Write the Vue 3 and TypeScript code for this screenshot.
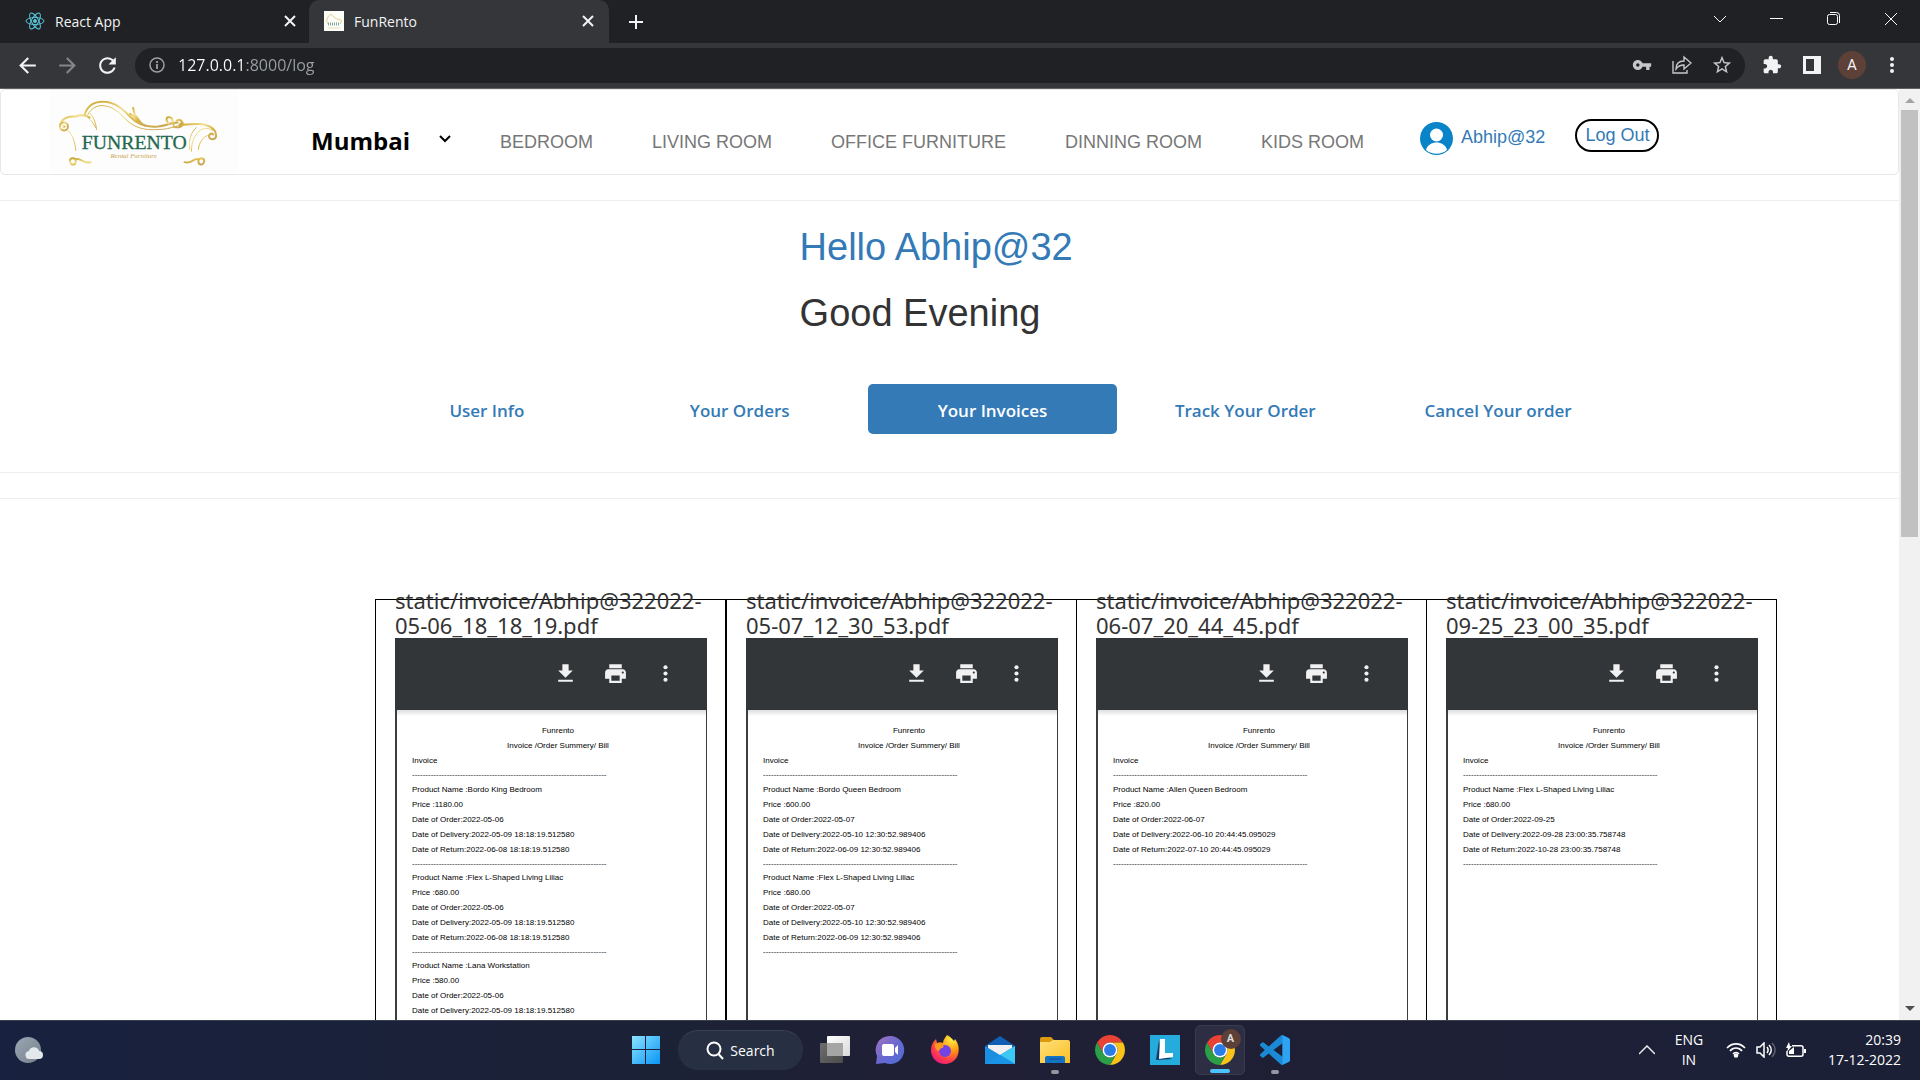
<script setup lang="ts">
import { ref } from 'vue'

interface Item {
  product: string
  price: string
  order: string
  delivery: string
  back?: string
}

interface Invoice {
  file: string
  items: Item[]
}

const user = 'Abhip@32'
const city = ref('Mumbai')
const address = ref('127.0.0.1:8000/log')
const categories = ['BEDROOM', 'LIVING ROOM', 'OFFICE FURNITURE', 'DINNING ROOM', 'KIDS ROOM']
const sections = ['User Info', 'Your Orders', 'Your Invoices', 'Track Your Order', 'Cancel Your order']
const current = ref('Your Invoices')
const rule = '-'.repeat(73)

const invoices: Invoice[] = [
  {
    file: 'static/invoice/Abhip@322022-05-06_18_18_19.pdf',
    items: [
      { product: 'Bordo King Bedroom', price: '1180.00', order: '2022-05-06', delivery: '2022-05-09 18:18:19.512580', back: '2022-06-08 18:18:19.512580' },
      { product: 'Flex L-Shaped Living Liliac', price: '680.00', order: '2022-05-06', delivery: '2022-05-09 18:18:19.512580', back: '2022-06-08 18:18:19.512580' },
      { product: 'Lana Workstation', price: '580.00', order: '2022-05-06', delivery: '2022-05-09 18:18:19.512580' },
    ],
  },
  {
    file: 'static/invoice/Abhip@322022-05-07_12_30_53.pdf',
    items: [
      { product: 'Bordo Queen Bedroom', price: '600.00', order: '2022-05-07', delivery: '2022-05-10 12:30:52.989406', back: '2022-06-09 12:30:52.989406' },
      { product: 'Flex L-Shaped Living Liliac', price: '680.00', order: '2022-05-07', delivery: '2022-05-10 12:30:52.989406', back: '2022-06-09 12:30:52.989406' },
    ],
  },
  {
    file: 'static/invoice/Abhip@322022-06-07_20_44_45.pdf',
    items: [
      { product: 'Allen Queen Bedroom', price: '820.00', order: '2022-06-07', delivery: '2022-06-10 20:44:45.095029', back: '2022-07-10 20:44:45.095029' },
    ],
  },
  {
    file: 'static/invoice/Abhip@322022-09-25_23_00_35.pdf',
    items: [
      { product: 'Flex L-Shaped Living Liliac', price: '680.00', order: '2022-09-25', delivery: '2022-09-28 23:00:35.758748', back: '2022-10-28 23:00:35.758748' },
    ],
  },
]
</script>

<template>
  <div class="desktop">
    <svg class="defs" aria-hidden="true">
      <defs>
        <linearGradient id="gold" x1="0" y1="0" x2="1" y2="1">
          <stop offset="0" stop-color="#c9a227" />
          <stop offset="0.35" stop-color="#f3e08e" />
          <stop offset="0.6" stop-color="#d9b544" />
          <stop offset="1" stop-color="#c8a65a" />
        </linearGradient>
        <linearGradient id="win" x1="0" y1="0" x2="1" y2="1">
          <stop offset="0" stop-color="#8be3ff" />
          <stop offset="1" stop-color="#0a95f7" />
        </linearGradient>
        <linearGradient id="tvBack" x1="0" y1="0" x2="1" y2="1">
          <stop offset="0" stop-color="#6e6e6e" />
          <stop offset="1" stop-color="#4b4b4b" />
        </linearGradient>
        <linearGradient id="tvFront" x1="0" y1="0" x2="1" y2="1">
          <stop offset="0" stop-color="#ffffff" />
          <stop offset="1" stop-color="#d9d9d9" />
        </linearGradient>
        <linearGradient id="chat" x1="0" y1="0" x2="1" y2="1">
          <stop offset="0" stop-color="#a574c0" />
          <stop offset="0.5" stop-color="#6a68d0" />
          <stop offset="1" stop-color="#4a6fd6" />
        </linearGradient>
        <radialGradient id="fox" cx="0.75" cy="0.15" r="1">
          <stop offset="0" stop-color="#fff24a" />
          <stop offset="0.4" stop-color="#ff980e" />
          <stop offset="0.75" stop-color="#ff3750" />
          <stop offset="1" stop-color="#e31587" />
        </radialGradient>
        <linearGradient id="mail" x1="0" y1="0" x2="1" y2="1">
          <stop offset="0" stop-color="#1b8fe0" />
          <stop offset="1" stop-color="#1a8de0" />
        </linearGradient>
        <linearGradient id="folder" x1="0" y1="0" x2="1" y2="1">
          <stop offset="0" stop-color="#ffe07a" />
          <stop offset="1" stop-color="#fbbf24" />
        </linearGradient>
        <linearGradient id="moon" x1="0" y1="0" x2="1" y2="1">
          <stop offset="0" stop-color="#9aa7b2" />
          <stop offset="1" stop-color="#75818c" />
        </linearGradient>
        <symbol id="sofa" viewBox="0 0 188 84">
          <g fill="none" stroke="url(#gold)" stroke-linecap="round">
            <path stroke-width="2" d="M34 25C37 15 45 11 54 12C66 13 73 20 80 27C87 35 96 38 108 37C116 36 122 33 128 33" />
            <path stroke-width="1" d="M37 25C41 18 47 15 54 16C63 17 69 23 76 30C84 38 94 41 108 40C118 40 124 37 130 36" />
            <path stroke-width="2" d="M9 36C10 29 18 26 25 27C30 24 36 26 39 28" />
            <path stroke-width="1" d="M39 23C43 28 45 32 46 40M36 27C41 31 43 34 45 38M17 41C22 46 24 52 25 61" />
            <circle stroke-width="2" cx="13" cy="37" r="4" />
            <circle stroke-width="1" cx="13" cy="37" r="1" />
            <path stroke-width="2" d="M83 18L86 31M80 24L91 34M84 25C89 28 88 33 95 36" />
            <path stroke-width="2" d="M119 34C115 30 117 26 121 28C125 30 121 34 124 35M127 31C130 29 134 31 131 35M124 37C129 39 134 37 133 33" />
            <path stroke-width="2" d="M130 35C140 36 148 33 155 35C163 37 167 41 167 46C167 50 162 51 160 48C159 45 162 43 164 45" />
            <path stroke-width="1" d="M142 62C142 52 145 45 152 40C157 38 161 39 164 41M149 60C150 52 154 48 158 46M147 38C142 42 139 50 140 60" />
            <path stroke-width="2" d="M19 72C19 68 25 68 25 72C25 76 20 77 19 72M25 70C30 68 31 75 40 73M155 72C155 68 149 68 149 72C149 76 154 77 155 72M149 70C144 68 144 75 135 73" />
            <path stroke-width="1" d="M40 74H135" />
          </g>
          <text x="31" y="60" font-family="'Liberation Serif', serif" font-size="20" fill="#22684f" stroke="#22684f" stroke-width="0.3">FUNRENTO</text>
          <text x="60" y="69" font-family="'Liberation Serif', serif" font-style="italic" font-size="7" fill="#c9a24a">Rental Furniture</text>
        </symbol>
        <symbol id="chrome" viewBox="0 0 48 48">
          <path fill="#ea4335" d="M3.22 12A24 24 0 0 1 44.78 12L24 12A12 12 0 0 0 13.61 30Z" />
          <path fill="#fbc31a" d="M44.78 12A24 24 0 0 1 24 48L34.39 30A12 12 0 0 0 24 12Z" />
          <path fill="#2b9f48" d="M3.22 12A24 24 0 0 0 24 48L34.39 30A12 12 0 0 1 13.61 30Z" />
          <circle cx="24" cy="24" r="12" fill="#fff" />
          <circle cx="24" cy="24" r="9.5" fill="#2a7de9" />
        </symbol>
        <symbol id="cross" viewBox="0 0 12 12">
          <path d="M1 1l10 10M11 1L1 11" fill="none" stroke="#f1f3f4" stroke-width="2" />
        </symbol>
        <symbol id="dots" viewBox="0 0 24 24">
          <circle cx="12" cy="6" r="2" /><circle cx="12" cy="12" r="2" /><circle cx="12" cy="18" r="2" />
        </symbol>
      </defs>
    </svg>

    <header class="browser">
      <div class="strip">
        <div class="tab">
          <svg class="fav" viewBox="0 0 20 20" fill="none" stroke="#58c4dc" stroke-width="1">
            <ellipse cx="10" cy="10" rx="9" ry="3.5" />
            <ellipse cx="10" cy="10" rx="9" ry="3.5" transform="rotate(60 10 10)" />
            <ellipse cx="10" cy="10" rx="9" ry="3.5" transform="rotate(120 10 10)" />
            <circle cx="10" cy="10" r="1.5" fill="#58c4dc" />
          </svg>
          <span>React App</span>
          <button class="x" aria-label="Close React App"><svg width="12" height="12"><use href="#cross" /></svg></button>
        </div>
        <div class="tab active">
          <svg class="fav" viewBox="0 0 20 20">
            <rect width="20" height="20" fill="#fdfdfa" />
            <path d="M3 9C4 4 7 2 9 5C11 8 14 8 17 9M2 9L4 13M18 9L16 13" fill="none" stroke="#e2cf83" />
            <path d="M4 13h12" stroke="#7fa99a" stroke-width="3" stroke-dasharray="1 1" />
            <path d="M4 17h12" stroke="#ecdfae" />
          </svg>
          <span>FunRento</span>
          <button class="x" aria-label="Close FunRento"><svg width="12" height="12"><use href="#cross" /></svg></button>
        </div>
        <button class="new" aria-label="New tab">
          <svg width="16" height="16" viewBox="0 0 16 16"><path d="M8 1v14M1 8h14" stroke="#f1f3f4" stroke-width="2" /></svg>
        </button>
        <div class="window">
          <button aria-label="Search tabs"><svg width="14" height="14" viewBox="0 0 14 14"><path d="M1 4l6 6 6-6" /></svg></button>
          <button aria-label="Minimize"><svg width="14" height="14" viewBox="0 0 14 14"><path d="M0 6.500h13" /></svg></button>
          <button aria-label="Restore"><svg width="14" height="14" viewBox="0 0 14 14"><rect x="0.500" y="2.500" width="10" height="10" rx="2" /><path d="M3 .5h6.500a3 3 0 0 1 3 3V11" /></svg></button>
          <button aria-label="Close"><svg width="14" height="14" viewBox="0 0 14 14"><path d="M1 1l12 12M13 1L1 13" /></svg></button>
        </div>
      </div>

      <div class="toolbar">
        <button class="nav-btn" aria-label="Back"><svg width="25" height="25" viewBox="0 0 24 24"><path d="M20 11H7.830l5.590-5.590L12 4l-8 8 8 8 1.410-1.410L7.830 13H20v-2z" /></svg></button>
        <button class="nav-btn dim" aria-label="Forward"><svg width="25" height="25" viewBox="0 0 24 24"><path d="M12 4l-1.410 1.410L16.170 11H4v2h12.170l-5.580 5.590L12 20l8-8z" /></svg></button>
        <button class="nav-btn" aria-label="Reload"><svg width="25" height="25" viewBox="0 0 24 24"><path d="M17.650 6.350C16.200 4.900 14.210 4 12 4c-4.420 0-7.990 3.580-7.990 8s3.570 8 7.990 8c3.730 0 6.840-2.550 7.730-6h-2.080c-.82 2.330-3.040 4-5.650 4-3.310 0-6-2.690-6-6s2.690-6 6-6c1.660 0 3.140.69 4.220 1.780L13 11h7V4l-2.350 2.350z" /></svg></button>
        <div class="omnibox">
          <svg width="16" height="16" viewBox="0 0 16 16"><circle cx="8" cy="8" r="7" fill="none" stroke="#9aa0a6" stroke-width="1.500" /><path d="M8 7v5M8 4v2" stroke="#9aa0a6" stroke-width="1.800" /></svg>
          <input v-model="address" class="url" type="text" aria-label="Address" />
          <button aria-label="Passwords"><svg width="20" height="20" viewBox="0 0 24 24"><path d="M12.650 10C11.830 7.670 9.610 6 7 6c-3.310 0-6 2.690-6 6s2.690 6 6 6c2.610 0 4.830-1.670 5.650-4H17v4h4v-4h2v-4H12.650zM7 14c-1.100 0-2-.9-2-2s.9-2 2-2 2 .9 2 2-.9 2-2 2z" /></svg></button>
          <button aria-label="Share"><svg width="20" height="20" viewBox="0 0 20 20"><path d="M1 6v12h14v-3M12 2l7 6-7 6v-4c-4 0-6 1-8 4 0-5 3-8 8-8z" fill="none" stroke="#c4c7cc" stroke-width="1.400" /></svg></button>
          <button aria-label="Bookmark"><svg width="22" height="22" viewBox="0 0 24 24"><path d="M22 9.240l-7.190-.62L12 2 9.190 8.630 2 9.240l5.460 4.730L5.820 21 12 17.270 18.180 21l-1.630-7.030L22 9.240zM12 15.400l-3.760 2.270 1-4.280-3.320-2.880 4.380-.38L12 6.100l1.710 4.040 4.380.38-3.320 2.880 1 4.280L12 15.400z" /></svg></button>
        </div>
        <div class="extras">
          <button aria-label="Extensions"><svg width="20" height="20" viewBox="0 0 24 24"><path d="M20.500 11H19V7c0-1.100-.9-2-2-2h-4V3.500C13 2.120 11.880 1 10.500 1S8 2.120 8 3.500V5H4c-1.100 0-1.990.9-1.990 2v3.800H3.500c1.490 0 2.700 1.210 2.700 2.700s-1.210 2.700-2.700 2.700H2V20c0 1.100.9 2 2 2h3.800v-1.500c0-1.490 1.210-2.700 2.700-2.700 1.490 0 2.700 1.210 2.700 2.700V22H17c1.100 0 2-.9 2-2v-4h1.500c1.380 0 2.500-1.120 2.500-2.500S21.880 11 20.500 11z" /></svg></button>
          <button aria-label="Side panel"><svg width="18" height="18" viewBox="0 0 18 18"><path fill-rule="evenodd" d="M0 0h18v18H0zM3 3v12h8V3z" /></svg></button>
          <button class="avatar" aria-label="Profile">A</button>
          <button aria-label="Menu"><svg width="24" height="24"><use href="#dots" /></svg></button>
        </div>
      </div>
    </header>

    <div class="viewport">
      <main class="page">
        <nav class="navbar">
          <svg class="logo" role="img" aria-label="Funrento"><use href="#sofa" /></svg>
          <div class="city">
            <select v-model="city" aria-label="City">
              <option>Mumbai</option>
            </select>
            <svg width="12" height="8" viewBox="0 0 12 8"><path d="M1 1l5 5 5-5" fill="none" stroke="#000" stroke-width="2" /></svg>
          </div>
          <div class="cats">
            <a v-for="c in categories" :key="c" href="#">{{ c }}</a>
          </div>
          <a class="account" href="#">
            <svg width="33" height="33" viewBox="0 0 33 33">
              <circle cx="16.500" cy="16.500" r="16.500" fill="#0a84c8" />
              <circle cx="16.500" cy="13" r="6.500" fill="#fff" />
              <path d="M6 28C7 23 12 20.500 16.500 20.500S26 23 27 28C21 33 12 33 6 28z" fill="#fff" />
            </svg>
            {{ user }}
          </a>
          <a class="logout" href="#">Log Out</a>
        </nav>

        <section class="hello">
          <h1 class="name">Hello {{ user }}</h1>
          <h1>Good Evening</h1>
          <div class="pills">
            <button v-for="s in sections" :key="s" :class="{ on: s === current }" @click="current = s">{{ s }}</button>
          </div>
        </section>

        <section class="cards">
          <article v-for="inv in invoices" :key="inv.file" class="card">
            <h4>{{ inv.file }}</h4>
            <div class="viewer">
              <div class="tools">
                <button aria-label="Download"><svg width="25" height="25" viewBox="0 0 24 24"><path d="M19 9h-4V3H9v6H5l7 7 7-7zM5 18v2h14v-2H5z" /></svg></button>
                <button aria-label="Print"><svg width="25" height="25" viewBox="0 0 24 24"><path d="M19 8H5c-1.660 0-3 1.340-3 3v6h4v4h12v-4h4v-6c0-1.660-1.340-3-3-3zm-3 11H8v-5h8v5zm3-7c-.55 0-1-.45-1-1s.45-1 1-1 1 .45 1 1-.45 1-1 1zm-1-9H6v4h12V3z" /></svg></button>
                <button aria-label="More actions"><svg width="25" height="25"><use href="#dots" /></svg></button>
              </div>
              <div class="sheet">
                <p class="mid">Funrento</p>
                <p class="mid">Invoice /Order Summery/ Bill</p>
                <p>Invoice</p>
                <p class="rule top">{{ rule }}</p>
                <template v-for="it in inv.items" :key="it.product">
                  <p>Product Name :{{ it.product }}</p>
                  <p>Price :{{ it.price }}</p>
                  <p>Date of Order:{{ it.order }}</p>
                  <p>Date of Delivery:{{ it.delivery }}</p>
                  <template v-if="it.back">
                    <p>Date of Return:{{ it.back }}</p>
                    <p class="rule">{{ rule }}</p>
                  </template>
                </template>
              </div>
            </div>
          </article>
        </section>
      </main>
      <div class="scroll">
        <svg width="10" height="5" viewBox="0 0 10 5"><path d="M0 5l5-5 5 5z" fill="#a3a3a3" /></svg>
        <div class="track"><div class="thumb"></div></div>
        <svg width="10" height="5" viewBox="0 0 10 5"><path d="M0 0l5 5 5-5z" fill="#505050" /></svg>
      </div>
    </div>

    <footer class="taskbar">
      <button class="side" aria-label="Weather">
        <svg width="28" height="28" viewBox="0 0 28 28">
          <circle cx="13" cy="14" r="13" fill="url(#moon)" />
          <path d="M15 23a4 4 0 0 1-1-8c1-5 9-5 10 0a4 4 0 0 1 0 8z" fill="#e3e8ec" />
        </svg>
      </button>
      <div class="apps">
        <button aria-label="Start">
          <svg width="30" height="30" viewBox="0 0 30 30" fill="url(#win)"><path d="M1 1h13v13H1zM15 1h14v13H15zM1 15h13v14H1zM15 15h14v14H15z" /></svg>
        </button>
        <button class="search">
          <svg width="20" height="20" viewBox="0 0 20 20" fill="none" stroke="#fff" stroke-width="2"><circle cx="9" cy="8" r="6.500" /><path d="M13.500 13L18 18" /></svg>
          Search
        </button>
        <button aria-label="Task view">
          <svg width="30" height="30" viewBox="0 0 30 30"><rect y="8" width="23" height="20" rx="1" fill="url(#tvBack)" /><rect x="7" y="1" width="23" height="20" rx="1" fill="url(#tvFront)" /><path d="M7 8h16v13H7z" fill="#a5a5a5" /></svg>
        </button>
        <button aria-label="Chat">
          <svg width="30" height="30" viewBox="0 0 30 30"><path d="M15 1a14 14 0 1 1-5 27L1 29l1-8A14 14 0 0 1 15 1z" fill="url(#chat)" /><rect x="7" y="9" width="12" height="12" rx="2" fill="#fff" /><path d="M20 13l3-3v10l-3-3z" fill="#fff" /></svg>
        </button>
        <button aria-label="Firefox">
          <svg width="30" height="30" viewBox="0 0 30 30">
            <path d="M17 0C22 3 23 5 24 6L25 4C29 9 30 16 27 22C24 27 19 29 15 29C7 29 1 23 1 15C1 10 3 7 6 4L7 8C9 7 11 7 13 8C13 5 15 3 17 0z" fill="url(#fox)" />
            <circle cx="15" cy="16" r="6" fill="#7542e5" />
            <path d="M5 9C8 7 12 9 14 12C12 13 10 13 9 16C6 15 4 12 5 9z" fill="#ff9a1f" />
          </svg>
        </button>
        <button aria-label="Mail">
          <svg width="30" height="30" viewBox="0 0 30 30"><path d="M0 11L15 1l15 10v5H0z" fill="#0f5fb4" /><path d="M3 10h24v8L15 24 3 18z" fill="#f1f1f4" /><path d="M0 11l15 9 15-9v18H0z" fill="url(#mail)" /><path d="M15 20l15-9v18z" fill="#3cc7f5" /><path d="M0 29l15-9 15 9z" fill="#1a94e4" /></svg>
        </button>
        <button class="run" aria-label="File Explorer">
          <svg width="30" height="30" viewBox="0 0 30 30"><path d="M0 4a2 2 0 0 1 2-2h9l3 3v5H0z" fill="#dc9a10" /><path d="M0 7h10l3-2h15a2 2 0 0 1 2 2v21H0z" fill="url(#folder)" /><path d="M5 28v-5a2 2 0 0 1 2-2h16a2 2 0 0 1 2 2v5z" fill="#1273c4" /><path d="M9 24h12" stroke="#0a4c91" /></svg>
        </button>
        <button aria-label="Chrome"><svg width="30" height="30"><use href="#chrome" /></svg></button>
        <button aria-label="L">
          <svg width="30" height="30" viewBox="0 0 30 30"><path fill="#25acdc" d="M0 0h30v30H0z" /><path fill="#123b6b" d="M9 5L6 25l16-1-10-4z" /><path fill="#fff" d="M10 4h5v14h8v4l-14 2z" /></svg>
        </button>
        <button class="focus" aria-label="Chrome profile A">
          <svg width="30" height="30"><use href="#chrome" /></svg>
          <span class="badge">A</span>
        </button>
        <button class="run" aria-label="Visual Studio Code">
          <svg width="30" height="30" viewBox="0 0 24 24" fill="#1a8ad6"><path d="M23.150 2.587L18.210.21a1.494 1.494 0 0 0-1.705.29l-9.460 8.630-4.120-3.128a.999.999 0 0 0-1.276.057L.327 7.261A1 1 0 0 0 .326 8.740L3.899 12 .326 15.260a1 1 0 0 0 .001 1.479L1.650 17.940a.999.999 0 0 0 1.276.057l4.120-3.128 9.460 8.630a1.492 1.492 0 0 0 1.704.290l4.942-2.377A1.500 1.500 0 0 0 24 20.060V3.939a1.500 1.500 0 0 0-.850-1.352zm-5.146 14.861L10.826 12l7.178-5.448v10.896z" /><path fill="#2ea3f2" d="M18 .2l5.150 2.387A1.500 1.500 0 0 1 24 3.939V20.060a1.500 1.500 0 0 1-.850 1.352L18 23.800z" /></svg>
        </button>
      </div>
      <div class="tray">
        <button aria-label="Hidden icons"><svg width="16" height="10" viewBox="0 0 16 10"><path d="M0 9l8-8 8 8" fill="none" stroke="#e9e9ee" stroke-width="1.500" /></svg></button>
        <button class="lang">ENG<br />IN</button>
        <button class="status" aria-label="Network, volume and battery">
          <svg width="20" height="16" viewBox="0 0 20 16" fill="none" stroke="#fff" stroke-width="1.600"><path d="M1 6C6 .5 14 .5 19 6M4 9c3-4 9-4 12 0M7 12c1.500-2 4.500-2 6 0" /><circle cx="10" cy="13.500" r="1.500" fill="#fff" /></svg>
          <svg width="20" height="16" viewBox="0 0 20 16" fill="none" stroke="#fff" stroke-width="1.500"><path d="M1 5h3l4-4v14l-4-4H1zM11 5c1.500 2 1.500 4 0 6M13 3c3 3 3 7 0 10" /><path d="M16 1c4 4 4 10 0 14" stroke="#5c5f72" /></svg>
          <svg width="20" height="16" viewBox="0 0 20 16"><path d="M6 3.800h9a2 2 0 0 1 2 2v6.400a2 2 0 0 1-2 2H3a2 2 0 0 1-2-2V9" fill="none" stroke="#fff" stroke-width="1.500" /><path d="M3 12V9l5-4v7zM18 7h2v4h-2zM3 0L0 6h2L1 10l5-6H4z" fill="#fff" /></svg>
        </button>
        <button class="clock">20:39<br />17-12-2022</button>
      </div>
    </footer>
  </div>
</template>

<style>
body {
  margin: 0;
  background: #fff;
}
</style>

<style scoped>
.desktop {
  --ui: 'Open Sans', 'Noto Sans', sans-serif;
  --body: 'Liberation Sans', Arial, sans-serif;
  display: flex;
  flex-direction: column;
  height: 100vh;
  overflow: hidden;
  font-family: var(--body);
}
*,
*::before,
*::after {
  box-sizing: border-box;
}
.defs {
  position: absolute;
  width: 0;
  height: 0;
}
svg {
  display: block;
  flex: none;
}
button {
  display: flex;
  align-items: center;
  justify-content: center;
  padding: 0;
  border: 0;
  background: none;
  color: inherit;
  font-family: var(--ui);
}
a {
  text-decoration: none;
}

/* Browser frame */
.browser {
  flex: none;
  background: #202124;
  color: #f1f3f4;
  font-family: var(--ui);
}
.strip {
  display: flex;
  height: 43px;
}
.tab {
  display: flex;
  align-items: center;
  width: 300px;
  padding: 0 15px 1px;
  font-size: 14px;
}
.tab:first-child {
  width: 309px;
  padding: 0 13px 1px 25px;
}
.tab.active {
  background: #35363a;
  border-radius: 10px 10px 0 0;
}
.tab span {
  flex: 1;
  padding-left: 10px;
}
.fav {
  width: 20px;
  height: 20px;
}
.x {
  width: 12px;
  height: 12px;
}
.new {
  width: 54px;
}
.window {
  display: flex;
  align-items: flex-start;
  gap: 43px;
  margin-left: auto;
  padding: 12px 22px;
}
.window svg {
  fill: none;
  stroke: #fff;
  stroke-width: 1;
}
.toolbar {
  display: flex;
  align-items: center;
  height: 46px;
  padding: 0 14px 1px 15px;
  background: #35363a;
  border-bottom: 1px solid #606164;
}
.toolbar svg {
  fill: #f1f3f4;
}
.nav-btn {
  width: 25px;
  margin-right: 15px;
}
.nav-btn.dim svg {
  fill: #85868a;
}
.omnibox {
  display: flex;
  flex: 1;
  align-items: center;
  gap: 18px;
  height: 35px;
  padding: 0 12px 0 14px;
  border-radius: 18px;
  background: #202124;
}
.omnibox button {
  width: 22px;
}
.omnibox button svg {
  fill: #c4c7cc;
}
.url {
  flex: 1;
  min-width: 0;
  margin-left: -5px;
  padding: 0;
  border: 0;
  outline: 0;
  font: 16px/24px var(--ui);
  color: transparent;
  background: linear-gradient(to right, #fff 68px, #9aa0a6 68px);
  background-clip: text;
  -webkit-background-clip: text;
}
.extras {
  display: flex;
  align-items: center;
  gap: 12px;
  padding-left: 13px;
}
.extras button {
  width: 28px;
  height: 28px;
}
.extras .avatar {
  border-radius: 50%;
  background: #5d4037;
  font: 15px/28px Roboto, sans-serif;
}

/* Page */
.viewport {
  display: flex;
  flex: 1;
  min-height: 0;
}
.page {
  flex: 1;
  overflow: hidden;
  background: #fff;
}
.scroll {
  display: flex;
  flex-direction: column;
  align-items: center;
  gap: 7px;
  width: 21px;
  padding: 9px 0;
  background: #f1f1f1;
}
.track {
  flex: 1;
  width: 17px;
}
.thumb {
  height: 48%;
  background: #c1c1c1;
}
.navbar {
  display: flex;
  align-items: flex-start;
  height: 86px;
  padding-left: 49px;
  border: 1px solid #e7e7e7;
  border-radius: 5px;
}
.logo {
  width: 188px;
  height: 83px;
  background: #fdfdfd;
}
.city {
  display: flex;
  align-items: center;
  gap: 4px;
  width: 189px;
  margin: 33px 0 0 73px;
}
.city select {
  width: 124px;
  padding: 0;
  border: 0;
  appearance: none;
  background: none;
  color: #000;
  font: bold 24px/36px var(--ui);
}
.city svg {
  margin-top: -4px;
}
.cats {
  display: flex;
  gap: 59px;
  margin: 39px 56px 0 0;
  font-size: 18px;
  line-height: 26px;
}
.cats a {
  color: #777;
  white-space: nowrap;
}
.account,
.logout {
  color: #337ab7;
  font-size: 18px;
  white-space: nowrap;
}
.account {
  display: flex;
  gap: 8px;
  margin: 32px 30px 0 0;
  line-height: 30px;
}
.logout {
  margin-top: 29px;
  padding: 0 8px;
  border: 2px solid #000;
  border-radius: 17px;
  line-height: 29px;
}
.hello {
  margin-top: 25px;
  border: solid #eee;
  border-width: 1px 0;
}
h1 {
  margin: 25px 0 0 42%;
  padding-left: 2px;
  color: #333;
  font-size: 38px;
  font-weight: 400;
  line-height: 42px;
}
h1.name {
  color: #337ab7;
}
.hello h1 + h1 {
  margin-top: 24px;
}
.pills {
  display: flex;
  gap: 3px;
  margin: 50px 276px 38px 362px;
}
.pills button {
  flex: 1;
  height: 50px;
  padding-top: 2px;
  border-radius: 5px;
  color: #337ab7;
  font-size: 17px;
  font-weight: 600;
}
.pills .on {
  background: #337ab7;
  color: #fff;
}
.cards {
  display: flex;
  margin-top: 25px;
  padding: 100px 122px 0 375px;
  border-top: 1px solid #eee;
}
.card {
  flex: 1;
  min-width: 0;
  height: 600px;
  padding: 0 18px 0 19px;
  border: 1px solid #000;
}
.card:nth-child(n + 3) {
  margin-left: -1px;
}
.card h4 {
  margin: -12px 0 0;
  color: #333;
  font: 22px/25px 'Noto Sans', 'Open Sans', sans-serif;
}
.viewer {
  height: 500px;
  padding: 0 1px 0 2px;
  background: #3a3e41;
}
.tools {
  display: flex;
  justify-content: flex-end;
  gap: 25px;
  height: 72px;
  margin: 0 -1px 0 -2px;
  padding: 0 29px 2px 0;
  background: #323639;
}
.tools svg {
  fill: #f1f1f1;
}
.sheet {
  height: 428px;
  padding: 13px 2px 0 15px;
  background: linear-gradient(#ddd, #fff 6px);
  color: #000;
  font-size: 8px;
  line-height: 15px;
}
.sheet p {
  margin: 0;
  white-space: nowrap;
}
.sheet .mid {
  text-align: center;
}
.sheet .rule {
  color: #222;
  line-height: 13px;
}
.sheet .top {
  line-height: 14px;
}

/* Taskbar */
.taskbar {
  display: grid;
  grid-template-columns: 1fr auto 1fr;
  align-items: center;
  flex: none;
  height: 60px;
  padding-bottom: 1px;
  border-top: 1px solid #3c404c;
  background: linear-gradient(to right, #18213f, #1c2236 35%, #201f35 50%, #1b2036);
  color: #fff;
  font-family: var(--ui);
}
.side {
  justify-self: start;
  margin-left: 15px;
}
.apps {
  display: flex;
  align-items: center;
  gap: 5px;
}
.apps button {
  position: relative;
  width: 50px;
  height: 50px;
  border-radius: 5px;
}
.apps .search {
  gap: 5px;
  width: 125px;
  height: 40px;
  margin: 0 2px;
  border-radius: 20px;
  border-top: 1px solid #3a4150;
  background: #273042;
  font-size: 14px;
}
.run::after,
.focus::after {
  content: '';
  position: absolute;
  bottom: 1px;
  width: 8px;
  height: 4px;
  border-radius: 2px;
  background: #9596a0;
}
.apps .focus {
  border: 1px solid #3a3b4f;
  background: #2d2d43;
}
.focus::after {
  width: 20px;
  background: #4cc2ff;
}
.badge {
  position: absolute;
  top: 3px;
  right: 3px;
  width: 20px;
  height: 20px;
  border-radius: 50%;
  background: #5d4037;
  color: #ddd;
  font: bold 11px/20px Roboto, sans-serif;
}
.tray {
  display: flex;
  align-items: center;
  justify-self: end;
  padding-right: 19px;
}
.tray button {
  font-size: 14px;
  line-height: 20px;
}
.tray .lang {
  width: 30px;
  margin: 0 22px 0 19px;
}
.tray .status {
  gap: 10px;
}
.tray .clock {
  margin-left: 22px;
  text-align: right;
}
</style>
